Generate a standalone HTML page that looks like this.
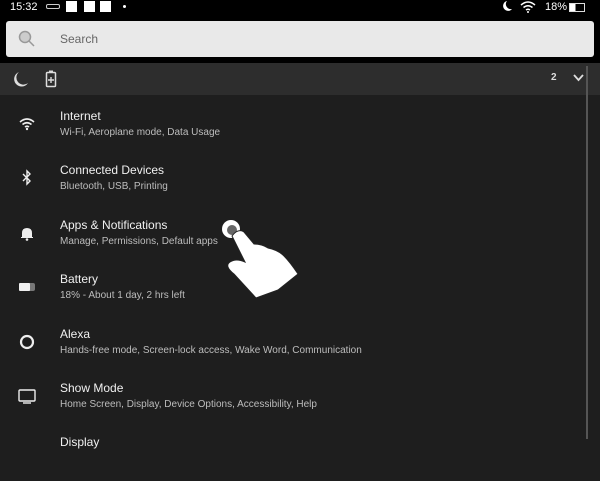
<!DOCTYPE html><html><head><style>
body{margin:0;width:600px;height:439px;overflow:hidden;background:#1e1e1e;font-family:"Liberation Sans",sans-serif;position:relative}
.sb{position:absolute;top:0;left:0;width:600px;height:63px;background:#000}
.search{position:absolute;left:6px;top:21px;width:588px;height:36px;background:#e9e9e9;border-radius:3px}
.search span{position:absolute;left:54px;top:11px;font-size:12px;color:#666}
.bar{position:absolute;top:63px;left:0;width:600px;height:32px;background:#2d2d2d}
.row{position:absolute;left:0;width:590px;height:54px}
.t{position:absolute;left:60px;top:8px;font-size:12px;color:#f0f0f0}
.s{position:absolute;left:60px;top:26px;font-size:10px;color:#bdbdbd}
.ic{position:absolute;left:18px;top:14px;width:18px;height:18px}
.scroll{position:absolute;left:586px;top:66px;width:2px;height:373px;background:#555}
</style></head><body>
<div class="sb">
<div style="position:absolute;left:10px;top:1px;color:#fff;font-size:11px">15:32</div>
<div style="position:absolute;left:46px;top:4px;width:12px;height:3px;border:1px solid #ccc;border-radius:2px"></div>
<div style="position:absolute;left:66px;top:1px;width:11px;height:11px;background:#fff"></div>
<div style="position:absolute;left:84px;top:1px;width:11px;height:11px;background:#fff"></div>
<div style="position:absolute;left:100px;top:1px;width:11px;height:11px;background:#fff"></div>
<div style="position:absolute;left:123px;top:5px;width:3px;height:3px;background:#fff;border-radius:50%"></div>
<svg style="position:absolute;left:501px;top:0px" width="12" height="12" viewBox="0 0 12 12"><path d="M6 1A5 5 0 1 0 11 9A5 5 0 0 1 6 1Z" fill="#fff"/></svg>
<svg style="position:absolute;left:520px;top:1px" width="16" height="12" viewBox="0 0 16 12"><path d="M1 4Q8-2 15 4M3.5 6.5Q8 3 12.5 6.5M6 9Q8 7.5 10 9" stroke="#fff" stroke-width="1.5" fill="none"/><circle cx="8" cy="11" r="1" fill="#fff"/></svg>
<div style="position:absolute;left:545px;top:1px;color:#fff;font-size:11px">18%</div>
<div style="position:absolute;left:569px;top:3px;width:14px;height:7px;border:1px solid #ddd;background:linear-gradient(90deg,#fff 40%,#000 40%)"></div>
<div class="search"><svg style="position:absolute;left:12px;top:9px" width="18" height="18"><circle cx="7" cy="7" r="5.5" stroke="#999" stroke-width="1.5" fill="#ccc"/><path d="M11 11L16 16" stroke="#999" stroke-width="1.5"/></svg><span>Search</span></div>
</div>
<div class="bar">
<svg style="position:absolute;left:12px;top:8px" width="17" height="17" viewBox="0 0 17 17"><path d="M7 1A7.5 7.5 0 1 0 16 12A7 7 0 0 1 7 1Z" fill="#ddd"/></svg>
<svg style="position:absolute;left:45px;top:7px" width="12" height="18" viewBox="0 0 12 18"><rect x="4" y="0.5" width="4" height="2" fill="#ddd"/><rect x="1.5" y="2.5" width="9" height="14" rx="1" stroke="#ddd" stroke-width="1.5" fill="none"/><path d="M6 7V13M3 10H9" stroke="#ddd" stroke-width="1.4"/></svg>
<div style="position:absolute;left:551px;top:9px;color:#ddd;font-size:10px;font-weight:bold">2</div>
<svg style="position:absolute;left:573px;top:11px" width="11" height="8"><path d="M1 1L5.5 6L10 1" stroke="#ddd" stroke-width="1.8" fill="none"/></svg>
</div>
<div class="scroll"></div>
<div class="row" style="top:101px"><svg class="ic" viewBox="0 0 18 18"><path d="M2 7Q9 1 16 7M4.5 9.5Q9 6 13.5 9.5M7 12Q9 10.5 11 12" stroke="#eee" stroke-width="1.6" fill="none"/><circle cx="9" cy="14" r="1.2" fill="#eee"/></svg><div class="t">Internet</div><div class="s">Wi-Fi, Aeroplane mode, Data Usage</div></div>
<div class="row" style="top:155px"><svg class="ic" viewBox="0 0 18 18"><path d="M5 5L12 12L9 15V2L12 5L5 12" stroke="#eee" stroke-width="1.4" fill="none"/></svg><div class="t">Connected Devices</div><div class="s">Bluetooth, USB, Printing</div></div>
<div class="row" style="top:210px"><svg class="ic" viewBox="0 0 18 18"><path d="M4 13V9Q4 4 9 4Q14 4 14 9V13H15V14H3V13Z" fill="#eee"/><circle cx="9" cy="15.5" r="1.3" fill="#eee"/></svg><div class="t">Apps &amp; Notifications</div><div class="s">Manage, Permissions, Default apps</div></div>
<div class="row" style="top:264px"><svg class="ic" viewBox="0 0 18 18"><rect x="1" y="5" width="16" height="8" rx="2" fill="#777"/><rect x="1" y="5" width="11" height="8" rx="1" fill="#eee"/></svg><div class="t">Battery</div><div class="s">18% - About 1 day, 2 hrs left</div></div>
<div class="row" style="top:319px"><svg class="ic" viewBox="0 0 18 18"><circle cx="9" cy="9" r="6" stroke="#eee" stroke-width="2.2" fill="none"/></svg><div class="t">Alexa</div><div class="s">Hands-free mode, Screen-lock access, Wake Word, Communication</div></div>
<div class="row" style="top:373px"><svg class="ic" viewBox="0 0 18 18"><rect x="1" y="3" width="16" height="11" rx="1" stroke="#eee" stroke-width="1.4" fill="none"/><path d="M5 16H13" stroke="#eee" stroke-width="1.4"/></svg><div class="t">Show Mode</div><div class="s">Home Screen, Display, Device Options, Accessibility, Help</div></div>
<div class="row" style="top:427px"><div class="t" style="top:8px">Display</div></div>
<svg style="position:absolute;left:218px;top:218px" width="84" height="90" viewBox="0 0 84 90"><circle cx="13" cy="11" r="9" fill="#fff"/><circle cx="14" cy="12" r="5" fill="#666"/><path d="M14 18L27 44Q18 40 12 44Q6 48 16 56L38 80L60 72L80 56Q72 44 66 38Q60 32 50 30Q44 26 36 26L26 14Q20 10 14 18Z" fill="#fff" stroke="#222" stroke-width="1"/></svg>
</body></html>
